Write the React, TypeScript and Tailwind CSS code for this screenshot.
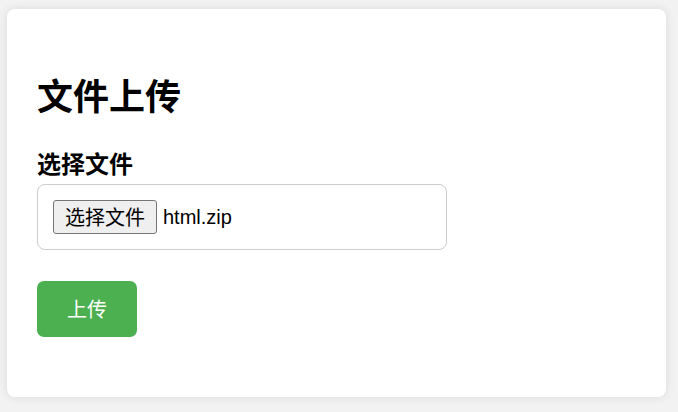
export default function App() {
  return (
    <div
      className="min-h-screen w-full bg-[#f2f2f2] pl-[7px] pt-[9px]"
      style={{ fontFamily: '"Liberation Sans", Arial, "Noto Sans CJK SC", sans-serif' }}
    >
      <div className="flex h-[388px] w-[659px] flex-col items-start rounded-[8px] bg-white px-[30px] pt-[63px] shadow-[0_0_10px_rgba(0,0,0,0.1)]">
        <h1 className="text-[36px] font-bold leading-[44px] text-black [font-family:'Noto_Sans_CJK_SC',sans-serif]">
          文件上传
        </h1>
        <label className="mt-[31px] block text-[24px] font-bold leading-[32px] text-black [font-family:'Noto_Sans_CJK_SC',sans-serif]">
          选择文件
        </label>
        <div className="mt-[5px] flex h-[66px] w-[410px] items-center rounded-[8px] border border-[#cccccc] pl-[15px]">
          <span className="flex h-[34px] w-[104px] items-center justify-center rounded-[3px] border border-[#767676] bg-[#efefef] text-[20px] leading-none text-black [font-family:'Noto_Sans_CJK_SC',sans-serif]">
            选择文件
          </span>
          <span className="ml-[6px] text-[20px] leading-none text-black">html.zip</span>
        </div>
        <button className="mt-[31px] flex h-[56px] w-[100px] items-center justify-center rounded-[7px] bg-[#4caf50] text-[20px] leading-none text-white [font-family:'Noto_Sans_CJK_SC',sans-serif]">
          上传
        </button>
      </div>
    </div>
  );
}
